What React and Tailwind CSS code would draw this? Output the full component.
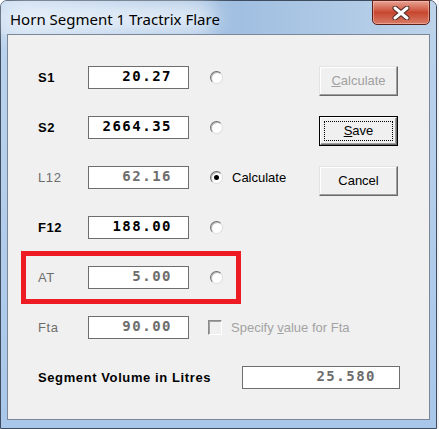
import React from "react";

const sans = { fontFamily: '"Liberation Sans", Arial, sans-serif' };
const mono = { fontFamily: '"DejaVu Sans Mono", "Liberation Mono", monospace' };

function Radio({ checked }) {
  return (
    <span className="w-[13px] h-[13px] rounded-full bg-white border border-[#6f6f6f] border-r-[#dcdcdc] border-b-[#dcdcdc] shadow-[inset_1px_1px_0_#b8b8b8] flex items-center justify-center shrink-0">
      {checked && <span className="w-[5px] h-[5px] rounded-full bg-black" />}
    </span>
  );
}

function Field({ value, dim, w = "w-[101px]", pr = "pr-[16px]" }) {
  return (
    <div
      className={`${w} h-[23px] shrink-0 bg-white border border-[#6e6e6e] flex items-center justify-end ${pr} pb-[2px] text-[14px] font-bold tracking-[1.5px] ${dim ? "text-[#6d6d6d]" : "text-black"}`}
      style={mono}
    >
      {value}
    </div>
  );
}

function Row({ label, value, dim, checked, extra }) {
  return (
    <div className="flex items-center h-[23px] whitespace-nowrap">
      <span className={`w-[50px] shrink-0 text-[13px] tracking-[0.6px] ${dim ? "text-[#6d6d6d]" : "font-bold text-black"}`}>{label}</span>
      <Field value={value} dim={dim} />
      <span className="ml-[21px]">
        <Radio checked={checked} />
      </span>
      {extra && <span className="ml-[9px] text-[13px] text-black">{extra}</span>}
    </div>
  );
}

function Button({ children, disabled, isDefault }) {
  return (
    <div
      className={`w-[79px] h-[30px] flex items-center justify-center text-[13px] bg-[#f0f0f0] ${
        isDefault
          ? "border border-black"
          : "border border-[#e3e3e3] border-r-[#696969] border-b-[#696969]"
      } ${disabled ? "text-[#a0a0a0]" : "text-black"}`}
    >
      <div
        className={`w-full h-full flex items-center justify-center ${
          isDefault
            ? "border border-white border-r-[#696969] border-b-[#696969] shadow-[inset_-1px_-1px_0_#a0a0a0]"
            : "shadow-[inset_-1px_-1px_0_#a0a0a0,inset_1px_1px_0_#ffffff]"
        }`}
      >
        {isDefault ? (
          <span className="w-[69px] h-[20px] border border-dotted border-black flex items-center justify-center">
            {children}
          </span>
        ) : (
          children
        )}
      </div>
    </div>
  );
}

export default function App() {
  return (
    <div className="w-[439px] h-[429px] bg-white flex" style={sans}>
      <div className="w-[437px] h-[429px] rounded-t-[7px] border border-[#3d4c5f] bg-gradient-to-b from-[#bcd3ec] to-[#a9c7ea] flex flex-col">
        {/* title bar */}
        <div className="relative h-[33px] shrink-0 rounded-t-[6px] bg-gradient-to-r from-[#c9dbef] via-[#9ebde0] to-[#bcd3ea]">
          <div className="absolute left-[0px] top-[3px] w-[215px] h-[28px] rounded-full bg-[#f2f7fc] opacity-90 blur-md" />
          <div
            className="absolute left-[9px] top-[8px] text-[15px] text-black leading-[20px]"
            style={{ fontFamily: '"Noto Sans", "Open Sans", sans-serif' }}
          >
            Horn Segment 1 Tractrix Flare
          </div>
          <div className="absolute left-[371px] top-[-1px] w-[58px] h-[25px] rounded-b-[5px] border border-[#5b221b] bg-gradient-to-b from-[#e7a395] via-[#c8462f] to-[#d77a66] flex items-center justify-center shadow-[inset_0_0_0_1px_rgba(255,200,190,0.5)]">
            <svg width="20" height="14" viewBox="0 0 20 14">
              <path d="M4 2 L16 12 M16 2 L4 12" stroke="#4a2a26" strokeWidth="5" strokeLinecap="round" />
              <path d="M4 2 L16 12 M16 2 L4 12" stroke="#ffffff" strokeWidth="3" strokeLinecap="round" />
            </svg>
          </div>
        </div>

        {/* client area */}
        <div className="mx-[6px] h-[386px] border border-[#7b8797] bg-[#f0f0f0] relative">
          <div className="flex flex-col gap-[27px] pt-[31px] pl-[30px]">
            <div className="flex">
              <div className="flex flex-col gap-[27px] w-[281px] shrink-0">
                <Row label="S1" value="20.27" />
                <Row label="S2" value="2664.35" />
                <Row label="L12" value="62.16" dim checked extra="Calculate" />
                <Row label="F12" value="188.00" />
                <Row label="AT" value="5.00" dim />
              </div>
              <div className="flex flex-col gap-[20px]">
                <Button disabled>
                  <span><span className="underline">C</span>alculate</span>
                </Button>
                <Button isDefault>
                  <span><span className="underline">S</span>ave</span>
                </Button>
                <Button>Cancel</Button>
              </div>
            </div>
            <div className="flex items-center h-[23px] whitespace-nowrap">
              <span className="w-[50px] shrink-0 text-[13px] tracking-[0.6px] text-[#6d6d6d]">Fta</span>
              <Field value="90.00" dim />
              <span className="ml-[19px] w-[14px] h-[15px] shrink-0 border border-[#8a8a8a] border-r-white border-b-white bg-[#f0f0f0] shadow-[inset_1px_1px_0_#a0a0a0]" />
              <span className="ml-[9px] text-[13px] text-[#a3a3a3]">
                Specify <span className="underline">v</span>alue for Fta
              </span>
            </div>
            <div className="flex items-center h-[23px] whitespace-nowrap">
              <span className="w-[204px] shrink-0 text-[13px] tracking-[0.6px] font-bold text-black">Segment Volume in Litres</span>
              <Field value="25.580" dim w="w-[158px]" pr="pr-[23px]" />
            </div>
          </div>

          {/* annotation */}
          <div className="absolute left-[13px] top-[216px] w-[220px] h-[53px] border-[5px] border-[#ed1c24]" />
        </div>
      </div>
      <div className="w-[2px] h-full bg-[#f4f4f4]" />
    </div>
  );
}
